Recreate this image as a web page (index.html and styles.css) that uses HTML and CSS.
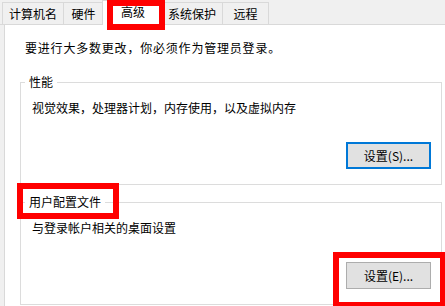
FILE: index.html
```html
<!DOCTYPE html>
<html lang="zh-CN">
<head>
<meta charset="utf-8">
<title>系统属性 - 高级</title>
<link rel="stylesheet" href="styles.css">
</head>
<body>
<div class="dialog">
  <div class="tabs">
    <div class="tab tab-first">计算机名</div>
    <div class="tab tab-hw">硬件</div>
    <div class="tab tab-active">高级<span class="mark mark-tab"></span></div>
    <div class="tab">系统保护</div>
    <div class="tab tab-remote">远程</div>
  </div>
  <div class="panel">
    <p class="intro">要进行大多数更改，你必须作为管理员登录。</p>
    <fieldset class="group">
      <legend class="group-title">性能</legend>
      <p class="desc">视觉效果，处理器计划，内存使用，以及虚拟内存</p>
      <div class="actions"><button class="btn btn-focus" type="button">设置(S)...</button></div>
    </fieldset>
    <fieldset class="group group-next">
      <legend class="group-title">用户配置文件<span class="mark mark-legend"></span></legend>
      <p class="desc">与登录帐户相关的桌面设置</p>
      <div class="actions"><button class="btn" type="button">设置(E)...<span class="mark mark-btn"></span></button></div>
    </fieldset>
  </div>
</div>
</body>
</html>
```
FILE: styles.css
```css
html, body {
  margin: 0;
  padding: 0;
  background: #f0f0f0;
}
body {
  width: 445px;
  height: 306px;
  overflow: hidden;
  font-family: "Noto Sans CJK SC", "Noto Sans", sans-serif;
  font-size: 12px;
  color: #000;
}
.dialog {
  display: flex;
  flex-direction: column;
  height: 306px;
}
.tabs {
  display: flex;
  align-items: flex-start;
  height: 24px;
  padding-left: 2px;
  border-bottom: 1px solid #d9d9d9;
  background: #f0f0f0;
}
.tab {
  box-sizing: border-box;
  margin-top: 2px;
  height: 22px;
  padding: 0 6px;
  line-height: 21px;
  text-align: center;
  white-space: nowrap;
  background: #f0f0f0;
  border-top: 1px solid #d9d9d9;
  border-right: 1px solid #d9d9d9;
}
.tab-first { border-left: 1px solid #d9d9d9; }
.tab-hw { width: 40px; }
.tab-remote { width: 46px; }
.tab-active {
  position: relative;
  z-index: 1;
  width: 62px;
  margin: 0 -2px;
  height: 25px;
  line-height: 22px;
  background: #fff;
  border-left: 1px solid #d9d9d9;
}
.panel {
  flex: 1;
  margin-left: 4px;
  padding: 15px 0 0 15px;
  background: #fff;
  border-left: 1px solid #d9d9d9;
}
.intro {
  margin: 0;
  padding-left: 5px;
  line-height: 16px;
  letter-spacing: 0.8px;
}
.group {
  box-sizing: border-box;
  width: 422px;
  margin: 18px 0 0;
  padding: 0 10px 15px 11px;
  border: 1px solid #dcdcdc;
  min-inline-size: 0;
}
.group-next { margin-top: 9px; }
.group-title {
  position: relative;
  margin-left: -7px;
  padding: 0 4px;
  line-height: 16px;
}
.desc {
  margin: 10px 0 0;
  line-height: 16px;
}
.actions {
  display: flex;
  justify-content: flex-end;
  margin-top: 26px;
}
.btn {
  position: relative;
  box-sizing: border-box;
  width: 85px;
  height: 27px;
  padding: 0;
  font: inherit;
  color: #000;
  background: #e1e1e1;
  border: 1px solid #adadad;
  border-radius: 0;
}
.btn-focus { border: 2px solid #0078d7; }
.mark {
  position: absolute;
  box-sizing: border-box;
  border: 6px solid #ff0000;
  pointer-events: none;
}
.mark-tab {
  left: 4px;
  top: -1px;
  width: 58px;
  height: 30px;
}
.mark-legend {
  left: -8px;
  top: -11px;
  width: 102px;
  height: 36px;
}
.mark-btn {
  left: -14px;
  top: -11px;
  width: 113px;
  height: 56px;
}
```
